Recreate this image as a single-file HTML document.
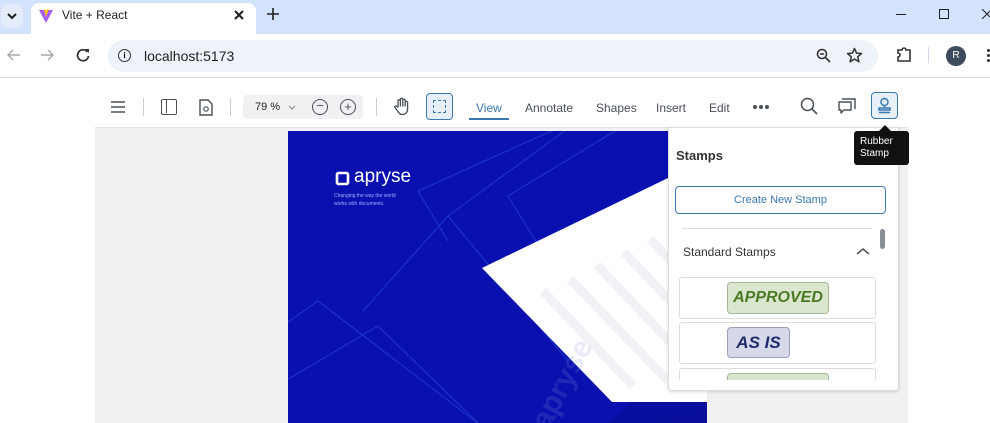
<!DOCTYPE html>
<html><head><style>
*{margin:0;padding:0;box-sizing:border-box}
html,body{width:990px;height:423px;overflow:hidden}
body{background:#fff;font-family:"Liberation Sans",sans-serif;position:relative}
.a{position:absolute}
.tb{font-size:12px;color:#485056}
</style></head><body>
<div class="a" style="left:0;top:0;width:990px;height:34px;background:#d3e3fd"></div>
<div class="a" style="left:1px;top:4px;width:22px;height:24px;background:#e4ecfb;border-radius:6px"></div>
<svg class="a" style="left:7px;top:12px" width="10" height="8"><path d="M1 2l4 4 4-4" stroke="#1f1f1f" stroke-width="2" fill="none"/></svg>
<div class="a" style="left:31px;top:3px;width:225px;height:31px;background:#fff;border-radius:8px 8px 0 0"></div>
<svg class="a" style="left:38px;top:8px" width="16" height="16"><path d="M1 2 L8 15 L15 2 Z" fill="#a65cf5"/><path d="M6 2 L8 9 L11 1Z" fill="#ffc517"/></svg>
<div class="a" style="left:62px;top:8px;font-size:12px;color:#1f1f1f">Vite + React</div>
<svg class="a" style="left:234px;top:10px" width="10" height="10"><path d="M1 1l8 8M9 1l-8 8" stroke="#1f1f1f" stroke-width="2"/></svg>
<svg class="a" style="left:267px;top:8px" width="12" height="12"><path d="M6 0v12M0 6h12" stroke="#1f1f1f" stroke-width="1.6"/></svg>
<div class="a" style="left:896px;top:14px;width:10px;height:1px;background:#1f1f1f"></div>
<div class="a" style="left:939px;top:9px;width:10px;height:10px;border:1px solid #1f1f1f"></div>
<svg class="a" style="left:982px;top:9px" width="10" height="10"><path d="M0 0l10 10M10 0l-10 10" stroke="#1f1f1f" stroke-width="1"/></svg>
<div class="a" style="left:0;top:34px;width:990px;height:44px;background:#fff;border-bottom:1px solid #e0e0e0"></div>
<svg class="a" style="left:7px;top:49px" width="14" height="12"><path d="M13 6H1M6 1L1 6l5 5" stroke="#aaa" stroke-width="1.5" fill="none"/></svg>
<svg class="a" style="left:40px;top:49px" width="14" height="12"><path d="M1 6h12M8 1l5 5-5 5" stroke="#aaa" stroke-width="1.5" fill="none"/></svg>
<svg class="a" style="left:76px;top:48px" width="14" height="14"><path d="M11.5 4A5.5 5.5 0 1 0 12.5 8" stroke="#333" stroke-width="1.8" fill="none"/><path d="M9 1h4v4z" fill="#333"/></svg>
<div class="a" style="left:108px;top:40px;width:770px;height:32px;background:#eef2f9;border-radius:16px"></div>
<div class="a" style="left:118px;top:49px;width:13px;height:13px;border:1.5px solid #333;border-radius:50%;font-size:8px;text-align:center;line-height:11px;font-weight:bold">i</div>
<div class="a" style="left:144px;top:48px;font-size:14px;color:#1f1f1f">localhost:5173</div>
<svg class="a" style="left:816px;top:48px" width="16" height="16"><circle cx="6" cy="6" r="4.5" stroke="#333" stroke-width="1.6" fill="none"/><path d="M4 6h4M9.5 9.5l4.5 4.5" stroke="#333" stroke-width="1.6"/></svg>
<svg class="a" style="left:846px;top:47px" width="17" height="17"><path d="M8.5 1.5l2 4.6 5 .4-3.8 3.3 1.2 4.9-4.4-2.7-4.4 2.7 1.2-4.9L1.5 6.5l5-.4z" stroke="#333" stroke-width="1.5" fill="none" stroke-linejoin="round"/></svg>
<svg class="a" style="left:895px;top:46px" width="18" height="18"><path d="M3 4h4a2 2 0 0 1 4 0h4v11H3v-4a2 2 0 0 0 0-4z" stroke="#333" stroke-width="1.6" fill="none"/></svg>
<div class="a" style="left:928px;top:47px;width:1px;height:16px;background:#cfd8e8"></div>
<div class="a" style="left:946px;top:46px;width:20px;height:20px;border-radius:50%;background:#3c4c5a;color:#fff;font-size:10px;text-align:center;line-height:20px">R</div>
<div class="a" style="left:987px;top:49px;width:3px;height:3px;background:#333;border-radius:50%;box-shadow:0 5px 0 #333,0 10px 0 #333"></div>
<div class="a" style="left:95px;top:127px;width:813px;height:296px;background:#f1f1f3;border-top:1px solid #e3e3e6"></div>
<svg class="a" style="left:111px;top:101px" width="14" height="12"><path d="M0 1h14M0 6h14M0 11h14" stroke="#485056" stroke-width="1.5"/></svg>
<div class="a" style="left:143px;top:98px;width:1px;height:18px;background:#ccc"></div>
<div class="a" style="left:161px;top:99px;width:16px;height:16px;border:1.5px solid #485056;border-radius:2px"><div style="width:5px;height:13px;border-right:1.5px solid #485056"></div></div>
<svg class="a" style="left:199px;top:99px" width="14" height="17"><path d="M1 1h8l4 4v11H1z" stroke="#485056" stroke-width="1.4" fill="none"/><circle cx="7" cy="10" r="2.2" stroke="#485056" stroke-width="1.2" fill="none"/></svg>
<div class="a" style="left:230px;top:98px;width:1px;height:18px;background:#ccc"></div>
<div class="a" style="left:243px;top:95px;width:120px;height:24px;background:#f1f1f3;border-radius:4px"></div>
<div class="a tb" style="left:255px;top:101px;font-size:11px;color:#222">79 %</div>
<svg class="a" style="left:288px;top:105px" width="8" height="5"><path d="M1 1l3 3 3-3" stroke="#888" stroke-width="1.2" fill="none"/></svg>
<div class="a" style="left:312px;top:99px;width:16px;height:16px;border:1.5px solid #485056;border-radius:50%;text-align:center;line-height:12px;font-size:13px;color:#485056">−</div>
<div class="a" style="left:340px;top:99px;width:16px;height:16px;border:1.5px solid #485056;border-radius:50%;text-align:center;line-height:13px;font-size:13px;color:#485056">+</div>
<div class="a" style="left:376px;top:98px;width:1px;height:18px;background:#ccc"></div>
<svg class="a" style="left:393px;top:97px" width="17" height="19"><path d="M5 10V4a1.2 1.2 0 0 1 2.4 0v5V2.5a1.2 1.2 0 0 1 2.4 0V9V3.5a1.2 1.2 0 0 1 2.4 0V9V5.5a1.2 1.2 0 0 1 2.4 0V12c0 3-2 5.5-5 5.5-2.5 0-3.5-1-5-3.5L2 10.5c-.7-1 .5-2 1.4-1.2z" stroke="#485056" stroke-width="1.3" fill="none" stroke-linejoin="round"/></svg>
<div class="a" style="left:426px;top:93px;width:27px;height:27px;border:1px solid #3b78b0;border-radius:4px;background:#e7f0f8"><div style="margin:6px;width:13px;height:13px;border:1.5px dashed #3b78b0"></div></div>
<div class="a tb" style="left:476px;top:101px;color:#3b78b0">View</div>
<div class="a" style="left:469px;top:118px;width:40px;height:2px;background:#3b78b0"></div>
<div class="a tb" style="left:525px;top:101px">Annotate</div>
<div class="a tb" style="left:596px;top:101px">Shapes</div>
<div class="a tb" style="left:656px;top:101px">Insert</div>
<div class="a tb" style="left:709px;top:101px">Edit</div>
<div class="a" style="left:753px;top:105px;width:4px;height:4px;background:#485056;border-radius:50%;box-shadow:6px 0 0 #485056,12px 0 0 #485056"></div>
<svg class="a" style="left:800px;top:97px" width="18" height="18"><circle cx="7.5" cy="7.5" r="6" stroke="#485056" stroke-width="1.5" fill="none"/><path d="M12 12l5 5" stroke="#485056" stroke-width="1.6"/></svg>
<svg class="a" style="left:838px;top:98px" width="18" height="16"><path d="M4 1h13v10" stroke="#485056" stroke-width="1.4" fill="none"/><path d="M1 4h12v8H6l-3 3v-3H1z" stroke="#485056" stroke-width="1.4" fill="none" stroke-linejoin="round"/></svg>
<div class="a" style="left:871px;top:92px;width:27px;height:27px;border:1px solid #3b78b0;border-radius:4px;background:#e7f0f8"></div>
<svg class="a" style="left:876px;top:97px" width="17" height="17"><circle cx="8.5" cy="5" r="3.5" fill="none" stroke="#3b78b0" stroke-width="1.5"/><path d="M8.5 8.5V11 M3 11h11v2H3z M3 15.5h11" stroke="#3b78b0" stroke-width="1.5" fill="none"/></svg>
<div class="a" style="left:288px;top:131px;width:419px;height:292px;background:#0a10b0;overflow:hidden">
<svg width="419" height="292" style="position:absolute;left:0;top:0">
<defs><linearGradient id="g" x1="0" y1="0" x2="1" y2="1"><stop offset="0" stop-color="#0a10b0" stop-opacity="0"/><stop offset="1" stop-color="#050a80" stop-opacity=".5"/></linearGradient></defs>
<g fill="none" stroke="#3a74e8" stroke-width="1" opacity=".4">
<path d="M-20 205 L30 170 L200 300"/><path d="M-20 260 L90 195 L190 292"/>
<path d="M75 180 L160 85 L280 230"/><path d="M160 85 L290 -10"/>
<path d="M130 60 L330 -30"/><path d="M130 60 L160 110"/>
<path d="M220 65 L360 -20"/><path d="M220 65 L260 130"/></g>
<polygon points="150,292 320,292 419,200 419,292" fill="url(#g)"/>
<polygon points="194,137 380,47 430,47 430,271 324,271" fill="#fff"/>
<g stroke="#f1f2f6" stroke-width="9"><path d="M255 160 L345 255"/><path d="M282 148 L380 250"/><path d="M309 134 L400 230"/><path d="M336 121 L420 210"/><path d="M362 108 L430 180"/></g>
<text x="0" y="0" transform="translate(260,300) rotate(-62)" font-size="30" font-weight="bold" fill="#8a90d8" opacity=".18" font-family="Liberation Sans">apryse</text>
</svg>
<svg class="a" style="left:46px;top:39px" width="17" height="17"><path d="M4 3h9l1 1v9l-1 1H4l-1-1V4z" fill="none" stroke="#fff" stroke-width="2.6" stroke-linejoin="round"/></svg>
<div class="a" style="left:66px;top:35px;color:#fff;font-size:19px">apryse</div>
<div class="a" style="left:46px;top:61px;color:#9bb0ff;font-size:5px;line-height:8px;width:70px">Changing the way the world works with documents.</div>
</div>
<div class="a" style="left:668px;top:127px;width:231px;height:264px;background:#fff;border:1px solid #ddd;border-radius:0 0 4px 4px;box-shadow:0 1px 3px rgba(0,0,0,.15)"></div>
<div class="a" style="left:676px;top:148px;font-size:13px;font-weight:bold;color:#333">Stamps</div>
<div class="a" style="left:675px;top:186px;width:211px;height:28px;border:1px solid #3b78b0;border-radius:4px;text-align:center;line-height:26px;font-size:11px;color:#3b78b0">Create New Stamp</div>
<div class="a" style="left:682px;top:228px;width:190px;height:1px;background:#ddd"></div>
<div class="a" style="left:880px;top:229px;width:5px;height:20px;background:#868e96;border-radius:3px"></div>
<div class="a" style="left:683px;top:245px;font-size:12px;color:#333">Standard Stamps</div>
<svg class="a" style="left:856px;top:247px" width="14" height="9"><path d="M1 7l6-5 6 5" stroke="#555" stroke-width="1.6" fill="none"/></svg>
<div class="a" style="left:679px;top:277px;width:197px;height:42px;border:1px solid #ddd;border-radius:3px"></div>
<div class="a" style="left:727px;top:282px;width:102px;height:32px;border:1px solid #a4b896;border-radius:4px;background:#dbe6cf;text-align:center;line-height:30px;font-size:16px;font-weight:bold;font-style:italic;color:#4a7a24">APPROVED</div>
<div class="a" style="left:679px;top:322px;width:197px;height:42px;border:1px solid #ddd;border-radius:3px"></div>
<div class="a" style="left:727px;top:327px;width:63px;height:31px;border:1px solid #9aa0c0;border-radius:4px;background:#d5d9ea;text-align:center;line-height:30px;font-size:17px;font-weight:bold;font-style:italic;color:#1f2b6a">AS IS</div>
<div class="a" style="left:679px;top:368px;width:197px;height:12px;border:1px solid #ddd;border-bottom:none;border-radius:3px 3px 0 0"></div>
<div class="a" style="left:727px;top:373px;width:102px;height:7px;border:1px solid #a4b896;border-bottom:none;border-radius:4px 4px 0 0;background:#dbe6cf"></div>
<div class="a" style="left:879px;top:125px;width:0;height:0;border:6px solid transparent;border-bottom-color:#111;border-top:none"></div>
<div class="a" style="left:854px;top:131px;width:55px;height:34px;background:#111;border-radius:3px;color:#fff;font-size:10px;line-height:12px;padding:5px 6px">Rubber Stamp</div>
</body></html>
